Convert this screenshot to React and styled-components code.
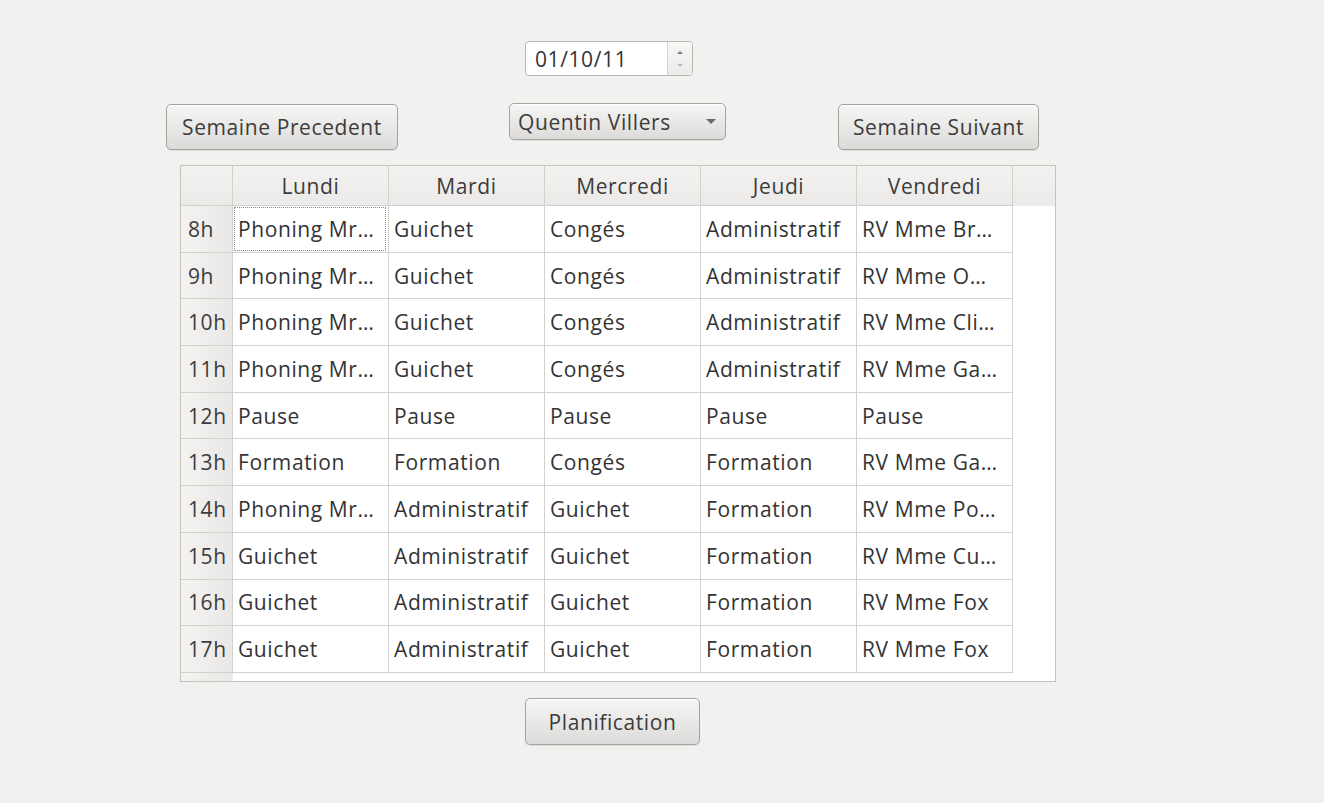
import React from 'react';
import styled, { createGlobalStyle } from 'styled-components';

const GlobalStyle = createGlobalStyle`
    html, body {
        margin: 0;
        padding: 0;
        background: #f2f1f0;
    }
    body {
        font-family: 'Open Sans', 'Noto Sans', 'DejaVu Sans', sans-serif;
        color: #3c3c3c;
        letter-spacing: 0.6px;
    }
`;

const Page = styled.div`
    width: 1324px;
    height: 803px;
    padding-top: 41px;
    box-sizing: border-box;
    display: flex;
    flex-direction: column;
`;

const SpinBox = styled.div`
    margin-left: 525px;
    width: 168px;
    height: 35px;
    box-sizing: border-box;
    display: flex;
    border: 1px solid #b9b7b4;
    border-radius: 4px;
    background: #fff;
    overflow: hidden;
`;

const SpinText = styled.div`
    flex: 1;
    display: flex;
    align-items: center;
    padding-left: 9px;
    font-size: 21px;
    color: #333;
    border-right: 1px solid #d6d4d1;
`;

const SpinArrows = styled.div`
    width: 24px;
    display: flex;
    flex-direction: column;
    align-items: center;
    justify-content: center;
    gap: 10px;
    background: linear-gradient(#f8f8f7, #ecebea);
`;

const Tri = styled.span`
    width: 0;
    height: 0;
    border-left: ${(p) => p.$size}px solid transparent;
    border-right: ${(p) => p.$size}px solid transparent;
    ${(p) => (p.$up ? 'border-bottom' : 'border-top')}: ${(p) => p.$size}px solid
        ${(p) => p.$color};
`;

const ControlRow = styled.div`
    margin-top: 27px;
    padding-left: 166px;
    display: flex;
    align-items: flex-start;
`;

const Button = styled.button`
    height: ${(p) => p.$h || 46}px;
    width: ${(p) => p.$w}px;
    margin-top: ${(p) => p.$top || 0}px;
    margin-left: ${(p) => p.$left || 0}px;
    box-sizing: border-box;
    border: 1px solid #a5a39f;
    border-radius: 5px;
    background: linear-gradient(#f6f6f5, #dcdbd9);
    box-shadow: inset 0 1px 0 #fff, 0 1px 1px rgba(0, 0, 0, 0.08);
    font-family: inherit;
    letter-spacing: inherit;
    font-size: 21px;
    color: #3c3c3c;
    padding: 0;
    display: flex;
    align-items: center;
    justify-content: center;
`;

const Combo = styled(Button)`
    justify-content: space-between;
    padding: 0 9px 0 8px;
`;

const Table = styled.div`
    margin-top: 15px;
    margin-left: 180px;
    width: 876px;
    height: 517px;
    box-sizing: border-box;
    border: 1px solid #c4c2bf;
    background: #fff;
    display: grid;
    grid-template-columns: 52px repeat(5, 156px) 1fr;
    grid-template-rows: 40px repeat(10, 46.7px) 1fr;
    font-size: 21px;
`;

const HeadCell = styled.div`
    background: linear-gradient(#f3f2f1, #ebeae8);
    border-right: 1px solid #d3d1ce;
    border-bottom: 1px solid #d3d1ce;
    display: flex;
    align-items: center;
    justify-content: center;
    color: #3c3c3c;
`;

const HeadFill = styled.div`
    background: linear-gradient(#f3f2f1, #ebeae8);
    border-bottom: 1px solid #ebeae8;
`;

const RowHead = styled.div`
    background: linear-gradient(90deg, #f4f3f2, #e9e8e6);
    border-right: 1px solid #d3d1ce;
    border-bottom: 1px solid #d3d1ce;
    display: flex;
    align-items: center;
    padding-left: 7px;
    color: #3c3c3c;
`;

const Cell = styled.div`
    border-right: 1px solid #d3d1ce;
    border-bottom: 1px solid #d3d1ce;
    display: flex;
    align-items: center;
    padding-left: 5px;
    white-space: nowrap;
    overflow: hidden;
    color: #333;
    position: relative;
    ${(p) =>
        p.$focus &&
        `&::after {
            content: '';
            position: absolute;
            inset: 1px 2px 1px 1px;
            border: 1px dotted #8a8a8a;
        }`}
`;

const Blank = styled.div``;

const Corner = styled.div`
    background: linear-gradient(90deg, #f4f3f2, #e9e8e6);
`;

const BottomRow = styled.div`
    margin-top: 16px;
    margin-left: 525px;
`;

const days = ['Lundi', 'Mardi', 'Mercredi', 'Jeudi', 'Vendredi'];

const rows = [
    ['8h', 'Phoning Mr…', 'Guichet', 'Congés', 'Administratif', 'RV Mme Br…'],
    ['9h', 'Phoning Mr…', 'Guichet', 'Congés', 'Administratif', 'RV Mme O…'],
    ['10h', 'Phoning Mr…', 'Guichet', 'Congés', 'Administratif', 'RV Mme Cli…'],
    ['11h', 'Phoning Mr…', 'Guichet', 'Congés', 'Administratif', 'RV Mme Ga…'],
    ['12h', 'Pause', 'Pause', 'Pause', 'Pause', 'Pause'],
    ['13h', 'Formation', 'Formation', 'Congés', 'Formation', 'RV Mme Ga…'],
    ['14h', 'Phoning Mr…', 'Administratif', 'Guichet', 'Formation', 'RV Mme Po…'],
    ['15h', 'Guichet', 'Administratif', 'Guichet', 'Formation', 'RV Mme Cu…'],
    ['16h', 'Guichet', 'Administratif', 'Guichet', 'Formation', 'RV Mme Fox'],
    ['17h', 'Guichet', 'Administratif', 'Guichet', 'Formation', 'RV Mme Fox'],
];

export default function App() {
    return (
        <Page>
            <GlobalStyle />
            <SpinBox>
                <SpinText>01/10/11</SpinText>
                <SpinArrows>
                    <Tri $up $size={3} $color="#777" />
                    <Tri $size={3} $color="#bbb" />
                </SpinArrows>
            </SpinBox>

            <ControlRow>
                <Button $w={232} $top={1}>Semaine Precedent</Button>
                <Combo $w={217} $h={37} $left={111}>
                    <span>Quentin Villers</span>
                    <Tri $size={5} $color="#6a6a6a" />
                </Combo>
                <Button $w={201} $top={1} $left={112}>Semaine Suivant</Button>
            </ControlRow>

            <Table>
                <HeadCell />
                {days.map((d) => (
                    <HeadCell key={d}>{d}</HeadCell>
                ))}
                <HeadFill />
                {rows.map((r, i) => (
                    <React.Fragment key={r[0]}>
                        <RowHead>{r[0]}</RowHead>
                        {r.slice(1).map((c, j) => (
                            <Cell key={j} $focus={i === 0 && j === 0}>
                                {c}
                            </Cell>
                        ))}
                        <Blank />
                    </React.Fragment>
                ))}
                <Corner />
            </Table>

            <BottomRow>
                <Button $w={175} $h={47}>Planification</Button>
            </BottomRow>
        </Page>
    );
}
